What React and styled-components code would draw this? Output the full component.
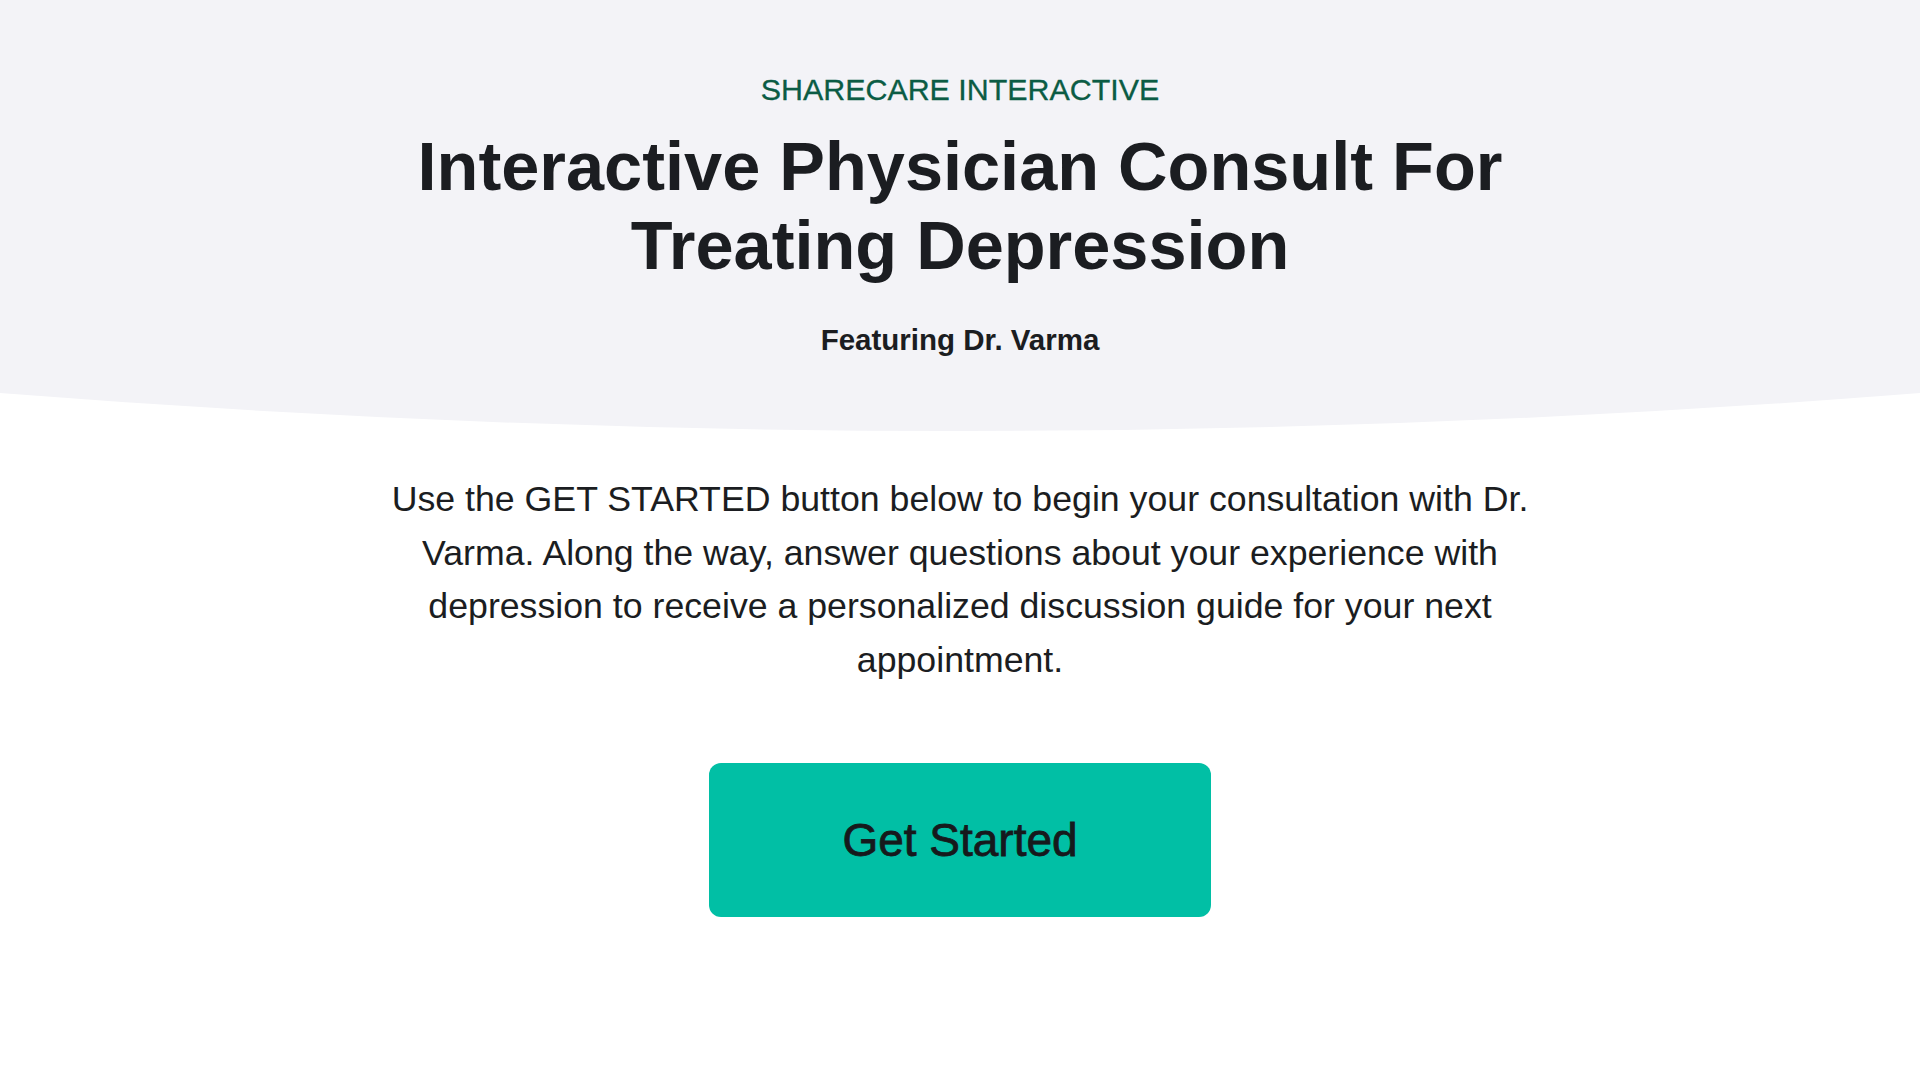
import React from 'react';
import { styled, createGlobalStyle } from 'styled-components';

const GlobalStyle = createGlobalStyle`
  html, body {
    margin: 0;
    padding: 0;
    background: #fff;
  }
  body {
    font-family: 'Liberation Sans', Arial, Helvetica, sans-serif;
    color: #1b1d21;
  }
  * {
    box-sizing: border-box;
  }
`;

const App = () => {
  return (
    <Page>
      <GlobalStyle />
      <Hero>
        <Eyebrow>SHARECARE INTERACTIVE</Eyebrow>
        <Title>
          Interactive Physician Consult For
          <br />
          Treating Depression
        </Title>
        <Byline>Featuring Dr. Varma</Byline>
      </Hero>
      <Curve viewBox="0 0 1920 38" preserveAspectRatio="none" aria-hidden="true">
        <path d="M0 0 H1920 Q960 76 0 0 Z" fill="#f3f3f7" />
      </Curve>
      <Body>
        <Intro>
          Use the GET STARTED button below to begin your consultation with Dr.
          Varma. Along the way, answer questions about your experience with
          depression to receive a personalized discussion guide for your next
          appointment.
        </Intro>
        <StartButton type="button">Get Started</StartButton>
      </Body>
    </Page>
  );
};

export default App;

const Page = styled.main`
  width: 100%;
  min-height: 1080px;
  background: #fff;
`;
const Hero = styled.header`
  display: flex;
  flex-direction: column;
  align-items: center;
  height: 393px;
  padding-top: 71px;
  background-color: #f3f3f7;
  text-align: center;
`;
const Eyebrow = styled.p`
  margin: 0;
  color: #0b5c44;
  font-size: 30.4px;
  line-height: 36px;
  -webkit-text-stroke: 0.3px #0b5c44;
`;
const Title = styled.h1`
  margin: 20px 0 0;
  color: #1b1d21;
  font-size: 68.5px;
  font-weight: 700;
  line-height: 79px;
`;
const Byline = styled.p`
  margin: 37px 0 0;
  color: #1b1d21;
  font-size: 29.5px;
  font-weight: 700;
  line-height: 36px;
`;
const Curve = styled.svg`
  display: block;
  width: 100%;
  height: 38px;
`;
const Body = styled.section`
  display: flex;
  flex-direction: column;
  align-items: center;
  padding-top: 42px;
`;
const Intro = styled.p`
  max-width: 1190px;
  margin: 0;
  color: #1b1d21;
  font-size: 35.7px;
  line-height: 53.5px;
  text-align: center;
`;
const StartButton = styled.button`
  display: flex;
  align-items: center;
  justify-content: center;
  width: 502px;
  height: 154px;
  margin-top: 76px;
  border: none;
  border-radius: 12px;
  background-color: #01bfa5;
  color: #16191c;
  font-family: 'Liberation Sans', Arial, Helvetica, sans-serif;
  font-size: 46px;
  -webkit-text-stroke: 0.8px #16191c;
  cursor: pointer;
`;
